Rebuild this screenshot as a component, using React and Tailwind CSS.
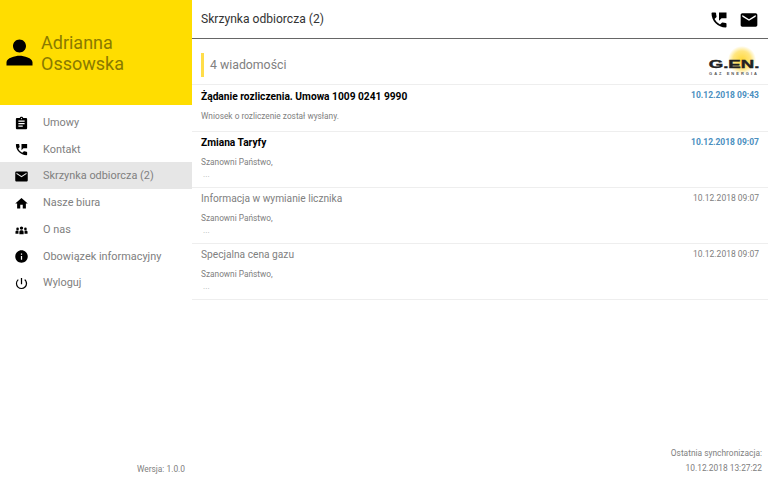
import React from 'react';
import {
    MdPerson,
    MdAssignment,
    MdPermPhoneMsg,
    MdEmail,
    MdHome,
    MdInfo,
    MdPowerSettingsNew,
} from 'react-icons/md';

const PeopleIcon = ({ className }) => (
    <svg viewBox="0 0 24 24" fill="currentColor" className={`${className} scale-[0.85]`}>
        <circle cx="12" cy="7.5" r="3.2" />
        <circle cx="4.6" cy="9" r="2.5" />
        <circle cx="19.4" cy="9" r="2.5" />
        <path d="M8 19v-4.5c0-2 1.8-3 4-3s4 1 4 3V19z" />
        <path d="M0.5 18v-3.5c0-1.6 1.7-2.6 4-2.6.6 0 1.2.1 1.8.2v5.9z" />
        <path d="M23.5 18v-3.5c0-1.6-1.7-2.6-4-2.6-.6 0-1.2.1-1.8.2v5.9z" />
    </svg>
);

const menu = [
    { label: 'Umowy', icon: MdAssignment },
    { label: 'Kontakt', icon: MdPermPhoneMsg },
    { label: 'Skrzynka odbiorcza (2)', icon: MdEmail, active: true },
    { label: 'Nasze biura', icon: MdHome },
    { label: 'O nas', icon: PeopleIcon },
    { label: 'Obowiązek informacyjny', icon: MdInfo },
    { label: 'Wyloguj', icon: MdPowerSettingsNew },
];

const messages = [
    {
        title: 'Żądanie rozliczenia. Umowa 1009 0241 9990',
        date: '10.12.2018 09:43',
        body: ['Wniosek o rozliczenie został wysłany.'],
        unread: true,
        height: 'h-[47px]',
        titlePad: 'pt-[0.5px]',
        gap: 'mt-[6px]',
    },
    {
        title: 'Zmiana Taryfy',
        date: '10.12.2018 09:07',
        body: ['Szanowni Państwo,', '...'],
        unread: true,
        height: 'h-[56px]',
        titlePad: '-mt-[0.5px]',
        gap: 'mt-[6.5px]',
    },
    {
        title: 'Informacja w wymianie licznika',
        date: '10.12.2018 09:07',
        body: ['Szanowni Państwo,', '...'],
        height: 'h-[56px]',
        titlePad: '-mt-[0.5px]',
        gap: 'mt-[6.5px]',
    },
    {
        title: 'Specjalna cena gazu',
        date: '10.12.2018 09:07',
        body: ['Szanowni Państwo,', '...'],
        height: 'h-[56px]',
        titlePad: '-mt-[0.5px]',
        gap: 'mt-[6.5px]',
    },
];

const Logo = () => (
    <div className="relative w-[52px] h-[34px] bg-[radial-gradient(circle_at_34px_17px,#ffd83a_0,#ffe680_9px,#ffffff_14px)]">
        <div className="absolute left-0 right-0 top-[15px] text-center font-['Liberation_Sans',sans-serif] font-bold text-[11.5px] leading-[12px] text-[#222] scale-x-[1.62] [-webkit-text-stroke:0.4px_#222]">
            G.EN.
        </div>
        <div className="absolute left-0 right-0 top-[28px] text-center font-['Liberation_Sans',sans-serif] font-bold text-[4px] leading-[5px] tracking-[2px] text-[#555]">
            GAZ ENERGIA
        </div>
    </div>
);

const MessageRow = ({ message }) => (
    <div className={`${message.height} px-[9px] border-b border-[#eeeeee]`}>
        <div className="flex justify-between items-start pt-[3px]">
            <div className={`text-[10.2px] leading-[16px] ${message.titlePad} ${message.unread ? 'font-bold text-black' : 'text-[#808080]'}`}>
                {message.title}
            </div>
            <div className={`text-[8.5px] leading-[12px] pt-[1px] ${message.unread ? 'font-bold text-[#4a8fc0]' : 'text-[#808080]'}`}>
                {message.date}
            </div>
        </div>
        <div className={`${message.gap} text-[8.3px] leading-[11.5px] text-[#808080]`}>
            {message.body.map((line, i) => (
                <div key={i} className={line === '...' ? 'text-[#b0b0b0] pl-[2px]' : ''}>
                    {line}
                </div>
            ))}
        </div>
    </div>
);

export default function App() {
    return (
        <div className="flex w-[768px] h-[480px] bg-white overflow-hidden font-['Roboto',sans-serif]">
            {/* Sidebar */}
            <aside className="w-[192px] flex flex-col shrink-0">
                <div className="h-[105px] bg-[#ffdd00] flex items-center">
                    <MdPerson className="w-[39px] h-[39px] text-black" />
                    <div className="ml-[2px] pt-[1px] text-[18px] leading-[21.5px] text-[#8a7a00]">
                        Adrianna
                        <br />
                        Ossowska
                    </div>
                </div>
                <nav className="pt-[3.5px]">
                    {menu.map((item) => (
                        <div
                            key={item.label}
                            className={`h-[26.75px] flex items-center pl-[14px] pt-[2.5px] ${item.active ? 'bg-[#e6e6e6]' : ''}`}
                        >
                            <item.icon className="w-[15px] h-[15px] text-black" />
                            <span className="ml-[14px] text-[10.9px] text-[#808080]">{item.label}</span>
                        </div>
                    ))}
                </nav>
                <div className="mt-auto pb-[5px] pr-[7px] text-right text-[8.4px] leading-[12px] text-[#808080]">
                    Wersja: 1.0.0
                </div>
            </aside>

            {/* Main */}
            <main className="flex-1 flex flex-col">
                <header className="h-[39px] flex items-center justify-between pl-[9px] pr-[9px] pt-[1px] border-b border-[#666666]">
                    <div className="text-[12.1px] text-[#333333]">Skrzynka odbiorcza (2)</div>
                    <div className="flex items-center gap-[10px]">
                        <MdPermPhoneMsg className="w-[20px] h-[20px] text-black" />
                        <MdEmail className="w-[20px] h-[20px] text-black" />
                    </div>
                </header>
                <div className="h-[46px] flex items-end justify-between pl-[9px] pr-[8px] pb-[7px] border-b border-[#eeeeee]">
                    <div className="border-l-[3px] border-[#ffdd4a] h-[24px] flex items-center pl-[6px] text-[12.3px] text-[#808080]">
                        4 wiadomości
                    </div>
                    <Logo />
                </div>
                {messages.map((message) => (
                    <MessageRow key={message.title} message={message} />
                ))}
                <div className="mt-auto pb-[4px] pr-[6px] text-right text-[8.4px] leading-[15px] text-[#808080]">
                    <div>Ostatnia synchronizacja:</div>
                    <div>10.12.2018 13:27:22</div>
                </div>
            </main>
        </div>
    );
}
